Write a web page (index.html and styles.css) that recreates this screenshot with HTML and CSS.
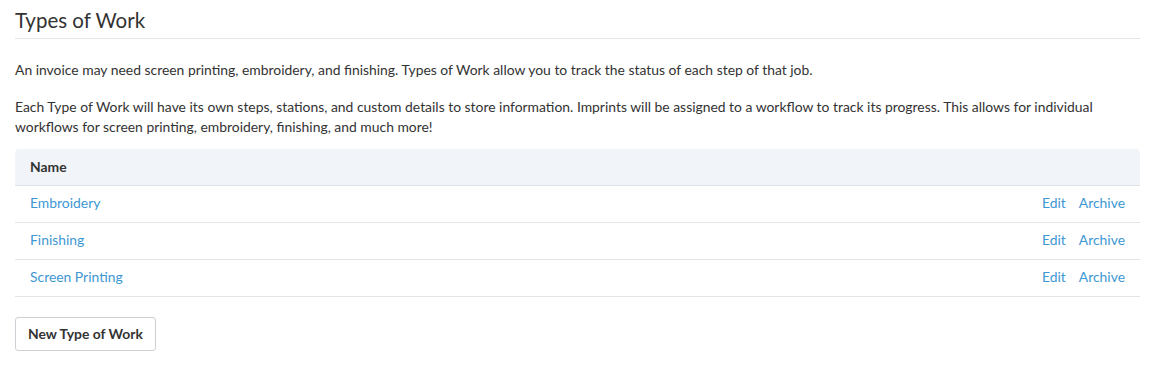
FILE: index.html
```html
<!DOCTYPE html>
<html>
<head>
<meta charset="utf-8">
<link rel="stylesheet" href="styles.css">
</head>
<body>
<div class="page">
  <h1 class="title">Types of Work</h1>
  <p class="intro">An invoice may need screen printing, embroidery, and finishing. Types of Work allow you to track the status of each step of that job.</p>
  <p class="intro second">Each Type of Work will have its own steps, stations, and custom details to store information. Imprints will be assigned to a workflow to track its progress. This allows for individual workflows for screen printing, embroidery, finishing, and much more!</p>
  <div class="table">
    <div class="thead">Name</div>
    <div class="row"><a class="name">Embroidery</a><span class="actions"><a>Edit</a><a>Archive</a></span></div>
    <div class="row"><a class="name">Finishing</a><span class="actions"><a>Edit</a><a>Archive</a></span></div>
    <div class="row"><a class="name">Screen Printing</a><span class="actions"><a>Edit</a><a>Archive</a></span></div>
  </div>
  <button class="btn">New Type of Work</button>
</div>
</body>
</html>
```
FILE: styles.css
```css
* { box-sizing: border-box; }
body {
  margin: 0;
  background: #fff;
  font-family: Lato, "Noto Sans", sans-serif;
  color: #333;
  font-size: 13.9px;
}
.page {
  padding: 0 16px 0 15px;
}
.title {
  margin: 0;
  padding-top: 8px;
  font-size: 20.5px;
  font-weight: 400;
  line-height: 25px;
  color: #333;
  padding-bottom: 5px;
  border-bottom: 1px solid #e3e6e8;
}
.intro {
  margin: 0;
  padding-top: 21px;
  line-height: 20px;
}
.intro.second {
  padding-top: 17px;
}
.table {
  margin-top: 12px;
}
.thead {
  height: 37px;
  background: #f1f4f8;
  border-radius: 4px 4px 0 0;
  border-bottom: 1px solid #dfe3e7;
  padding: 0 15px 1px;
  display: flex;
  align-items: center;
  font-weight: 700;
  color: #333;
}
.row {
  height: 37px;
  border-bottom: 1px solid #e3e6e9;
  padding: 0 15px 3px;
  display: flex;
  align-items: center;
  justify-content: space-between;
}
.row a { color: #3d97d3; }
.actions { display: flex; gap: 13px; }
.btn {
  margin-top: 20px;
  height: 34px;
  padding: 0 12px 1px;
  background: #fff;
  border: 1px solid #ccd0d4;
  border-radius: 3px;
  font-family: inherit;
  font-size: 13.9px;
  font-weight: 700;
  color: #333;
}
```
